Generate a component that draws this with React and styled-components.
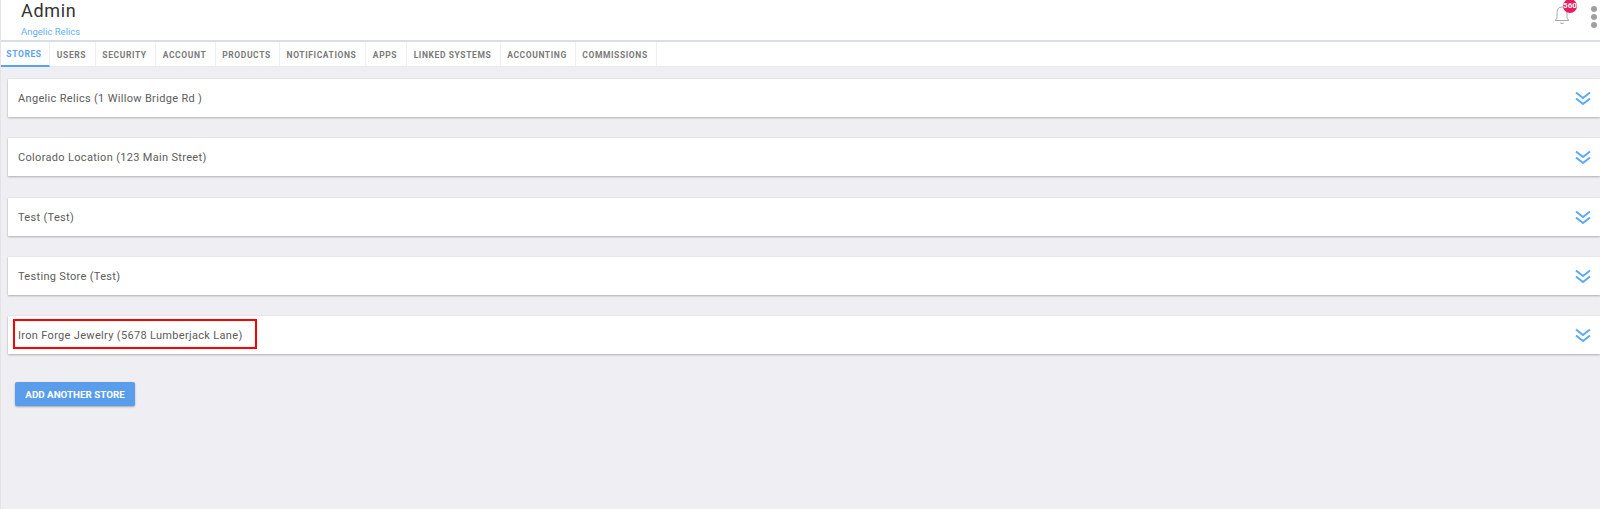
import React from "react";
import styled, { createGlobalStyle } from "styled-components";

const Global = createGlobalStyle`
  html, body { margin: 0; padding: 0; height: 100%; }
  body { background: #eeeef3; font-family: Roboto, "Liberation Sans", sans-serif; }
  * { box-sizing: border-box; }
`;

const Page = styled.div`
  height: 509px;
  overflow: hidden;
  border-left: 1px solid #e4e4e8;
`;

const Header = styled.header`
  display: flex;
  justify-content: space-between;
  height: 42px;
  padding-left: 20px;
  background: #fff;
  border-bottom: 2px solid #d9dde6;
`;

const Titles = styled.div`
  display: flex;
  flex-direction: column;
`;

const Title = styled.h1`
  margin: 0;
  font-size: 18px;
  font-weight: 400;
  line-height: 22px;
  letter-spacing: 0.65px;
  color: #333;
`;

const Subtitle = styled.a`
  margin-top: 3px;
  font-size: 9.5px;
  line-height: 13px;
  color: #64b0fa;
`;

const Actions = styled.div`
  display: flex;
  align-items: flex-start;
  gap: 21px;
  padding-right: 3px;
`;

const Bell = styled.div`
  position: relative;
  width: 16px;
  height: 24px;
  margin-top: 5px;
`;

const Badge = styled.span`
  position: absolute;
  top: -6px;
  left: 9px;
  width: 14px;
  height: 14px;
  border-radius: 50%;
  background: #ea1c60;
  color: #fff;
  font-size: 8px;
  font-weight: 700;
  line-height: 14px;
  text-align: center;
  overflow: hidden;
`;

const Dots = styled.div`
  display: flex;
  flex-direction: column;
  gap: 2px;
  padding-top: 6px;
`;

const Dot = styled.span`
  width: 6px;
  height: 6px;
  border-radius: 50%;
  background: #a0a0a0;
`;

const Tabs = styled.nav`
  display: flex;
  height: 25px;
  background: #fff;
  border-bottom: 1px solid #e9eaee;
`;

const Tab = styled.a`
  display: flex;
  align-items: center;
  justify-content: center;
  width: ${(p) => p.$w}px;
  height: ${(p) => (p.$active ? 25 : 24)}px;
  padding: 1px 2px 0 0;
  border-right: 1px solid #eeeff2;
  border-bottom: ${(p) => (p.$active ? "2px solid #5aa2f0" : "none")};
  font-size: 8.5px;
  font-weight: 700;
  letter-spacing: 0.6px;
  color: ${(p) => (p.$active ? "#5aa2f0" : "#7a7a7a")};
`;

const Content = styled.main`
  display: flex;
  flex-direction: column;
  gap: 21.25px;
  padding: 12px 0 0 7px;
`;

const Card = styled.section`
  position: relative;
  display: flex;
  align-items: center;
  justify-content: space-between;
  height: 38px;
  padding: 1px 9px 0 10px;
  background: #fff;
  box-shadow: 0 1px 2px rgba(0, 0, 0, 0.25), 0 0 1px rgba(0, 0, 0, 0.15);
  font-size: 11px;
  letter-spacing: 0.32px;
  color: #5c5c5c;
`;

const Highlight = styled.span`
  position: absolute;
  left: 5px;
  top: 3px;
  width: 244px;
  height: 30px;
  border: 2px solid #f00;
`;

const AddButton = styled.button`
  align-self: flex-start;
  width: 120px;
  height: 24px;
  margin: 7px 0 0 7px;
  padding: 0;
  border: none;
  border-radius: 2px;
  background: #5a9deb;
  box-shadow: 0 1px 2px rgba(0, 0, 0, 0.3);
  color: #fff;
  font-family: inherit;
  font-size: 9.8px;
  font-weight: 700;
`;

const tabs = [
  ["STORES", 49],
  ["USERS", 46],
  ["SECURITY", 60],
  ["ACCOUNT", 60],
  ["PRODUCTS", 64],
  ["NOTIFICATIONS", 86],
  ["APPS", 41],
  ["LINKED SYSTEMS", 94],
  ["ACCOUNTING", 75],
  ["COMMISSIONS", 81],
];

const stores = [
  "Angelic Relics (1 Willow Bridge Rd )",
  "Colorado Location (123 Main Street)",
  "Test (Test)",
  "Testing Store (Test)",
  "Iron Forge Jewelry (5678 Lumberjack Lane)",
];

function BellIcon() {
  return (
    <svg width="16" height="20" viewBox="0 0 16 20" fill="none" stroke="#a8a8a8" strokeWidth="1">
      <path d="M1 15.500c1.500-1 2-2 2-4V7.500C3 4 5 2 8 2s5 2 5 5.500v4c0 2 .5 3 2 4z" />
      <path d="M6 17.500c.5 1.300 3.500 1.300 4 0" />
    </svg>
  );
}

function ChevronsDown() {
  return (
    <svg width="16" height="15" viewBox="0 0 16 15" fill="none" stroke="#5aaaf5" strokeWidth="2">
      <path d="M1 1.500l7 5.500 7-5.500" />
      <path d="M1 7.500l7 5.500 7-5.500" />
    </svg>
  );
}

export default function App() {
  return (
    <Page>
      <Global />
      <Header>
        <Titles>
          <Title>Admin</Title>
          <Subtitle>Angelic Relics</Subtitle>
        </Titles>
        <Actions>
          <Bell>
            <BellIcon />
            <Badge>560</Badge>
          </Bell>
          <Dots>
            <Dot />
            <Dot />
            <Dot />
          </Dots>
        </Actions>
      </Header>
      <Tabs>
        {tabs.map(([label, w], i) => (
          <Tab key={label} $w={w} $active={i === 0}>
            {label}
          </Tab>
        ))}
      </Tabs>
      <Content>
        {stores.map((s, i) => (
          <Card key={s}>
            {s}
            <ChevronsDown />
            {i === 4 && <Highlight />}
          </Card>
        ))}
        <AddButton>ADD ANOTHER STORE</AddButton>
      </Content>
    </Page>
  );
}
